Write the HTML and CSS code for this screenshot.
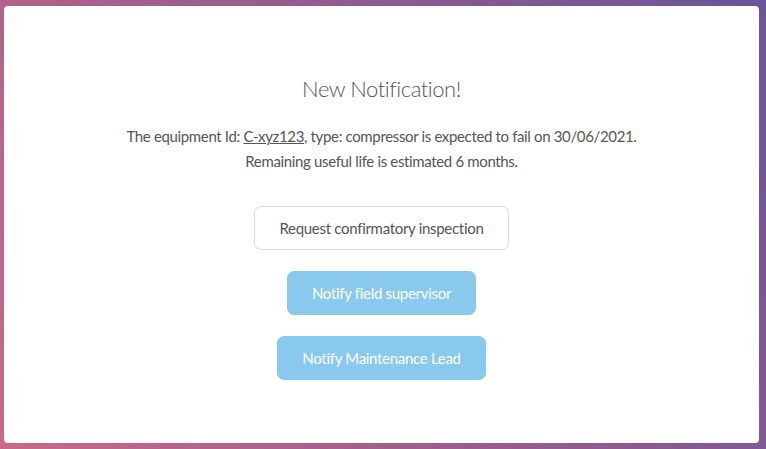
FILE: index.html
```html
<!DOCTYPE html>
<html>
<head>
<meta charset="utf-8">
<link rel="stylesheet" href="styles.css">
</head>
<body>
<div class="card">
  <h1 class="title">New Notification!</h1>
  <p class="msg">The equipment Id: <a class="link" href="#">C-xyz123</a>, type: compressor is expected to fail on 30/06/2021.<br>Remaining useful life is estimated 6 months.</p>
  <div class="actions">
    <button class="btn btn-outline">Request confirmatory inspection</button>
    <button class="btn btn-primary">Notify field supervisor</button>
    <button class="btn btn-primary">Notify Maintenance Lead</button>
  </div>
</div>
</body>
</html>
```
FILE: styles.css
```css
html, body {
  margin: 0;
  height: 100%;
}
body {
  background: linear-gradient(60deg, #c86a88 0%, #9c5d8d 45%, #6a5499 100%);
  padding: 6px 7px 6px 4px;
  box-sizing: border-box;
  font-family: Lato, "Open Sans", sans-serif;
  font-weight: 400;
}
.card {
  background: #fff;
  border-radius: 4px;
  height: 100%;
  display: flex;
  flex-direction: column;
  align-items: center;
  padding-top: 70px;
  box-sizing: border-box;
}
.title {
  margin: 0;
  font-size: 22px;
  font-weight: 300;
  color: #555;
  line-height: 26px;
  letter-spacing: -0.45px;
}
.msg {
  margin: 22px 0 0;
  font-size: 15px;
  line-height: 25px;
  color: #555;
  text-align: center;
  letter-spacing: -0.35px;
}
.link {
  color: #555;
  text-decoration: underline;
}
.actions {
  margin-top: 32px;
  display: flex;
  flex-direction: column;
  align-items: center;
  gap: 21px;
}
.btn {
  height: 44px;
  padding: 0 24px;
  border-radius: 7px;
  font-family: inherit;
  font-weight: 400;
  font-size: 15px;
  letter-spacing: -0.3px;
  cursor: pointer;
}
.btn-outline {
  background: #fff;
  border: 1px solid #d8d8d8;
  color: #555;
}
.btn-primary {
  background: #89c9ed;
  border: 1px solid #89c9ed;
  color: #fff;
}
```
